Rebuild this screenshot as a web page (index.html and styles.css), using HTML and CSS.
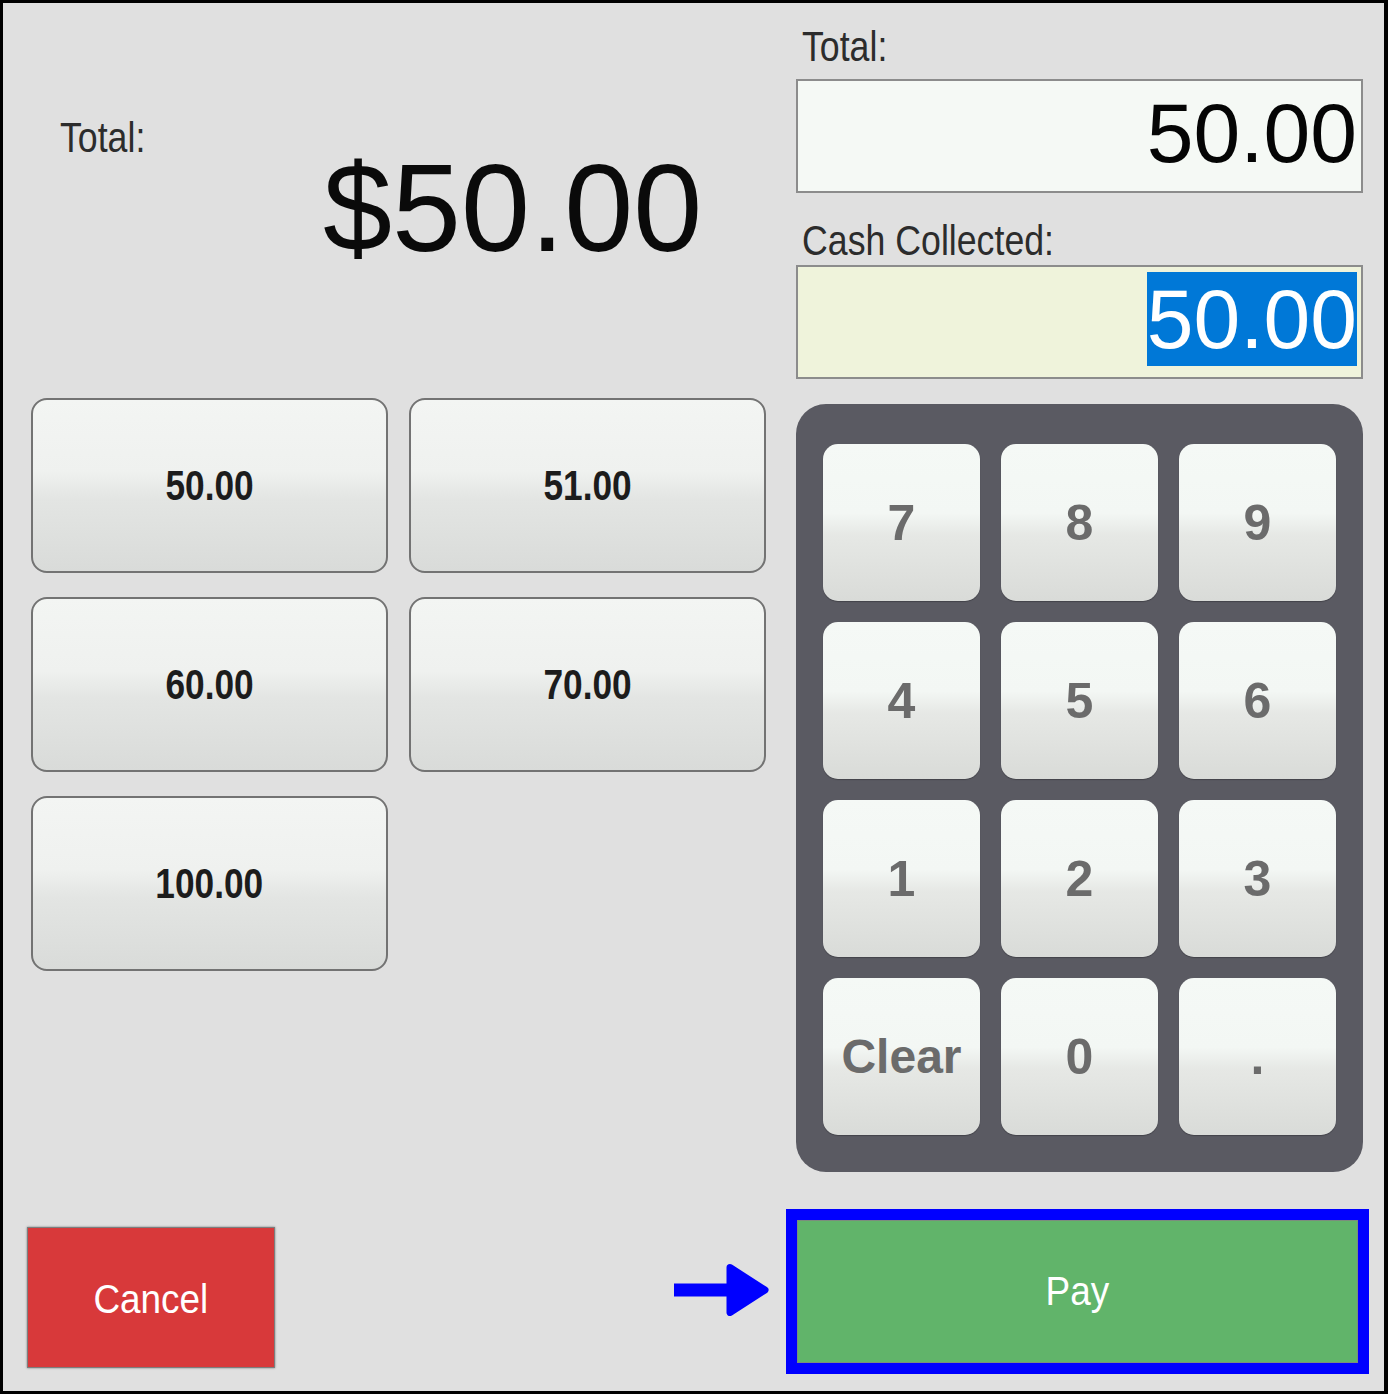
FILE: index.html
```html
<!DOCTYPE html>
<html lang="en">
<head>
<meta charset="utf-8">
<title>Cash Payment</title>
<link rel="stylesheet" href="styles.css">
</head>
<body>
<div class="frame">
  <div class="screen">
    <section class="left">
      <div class="summary-label"><span class="narrow">Total:</span></div>
      <div class="summary-amount">$50.00</div>
      <div class="quick-grid">
        <button class="quick"><span class="narrow-c">50.00</span></button>
        <button class="quick"><span class="narrow-c">51.00</span></button>
        <button class="quick"><span class="narrow-c">60.00</span></button>
        <button class="quick"><span class="narrow-c">70.00</span></button>
        <button class="quick"><span class="narrow-c">100.00</span></button>
      </div>
    </section>
    <section class="right">
      <div class="field-label"><span class="narrow">Total:</span></div>
      <div class="field field-total"><span class="field-value">50.00</span></div>
      <div class="field-label field-label-cash"><span class="narrow">Cash Collected:</span></div>
      <div class="field field-cash"><span class="field-value selected">50.00</span></div>
      <div class="keypad">
        <button class="key">7</button>
        <button class="key">8</button>
        <button class="key">9</button>
        <button class="key">4</button>
        <button class="key">5</button>
        <button class="key">6</button>
        <button class="key">1</button>
        <button class="key">2</button>
        <button class="key">3</button>
        <button class="key key-clear">Clear</button>
        <button class="key">0</button>
        <button class="key">.</button>
      </div>
    </section>
    <div class="actions-left">
      <button class="cancel"><span class="narrow-c narrow-wide">Cancel</span></button>
      <svg class="arrow" viewBox="0 0 95 52" width="95" height="52" aria-hidden="true">
        <rect x="0" y="19.5" width="60" height="13" fill="#0000ff"/>
        <polygon points="56,3.5 91,26 56,48.5" fill="#0000ff" stroke="#0000ff" stroke-width="7" stroke-linejoin="round"/>
      </svg>
    </div>
    <div class="actions-right">
      <div class="pay-highlight">
        <button class="pay"><span class="narrow-c narrow-wide">Pay</span></button>
      </div>
    </div>
  </div>
</div>
</body>
</html>
```
FILE: styles.css
```css
html, body {
  margin: 0;
  padding: 0;
  background: #ffffff;
}

.frame {
  width: 1388px;
  height: 1394px;
  box-sizing: border-box;
  border: 3px solid #000000;
  border-right-width: 4px;
  background: #e0e0e0;
  font-family: "Liberation Sans", Arial, sans-serif;
  overflow: hidden;
}

.screen {
  display: grid;
  grid-template-columns: 735px 567px;
  grid-template-rows: 1206px 165px;
  column-gap: 30px;
  padding-left: 28px;
}

button {
  margin: 0;
  padding: 0;
  cursor: pointer;
}

/* condensed text (Arial Narrow look) */
.narrow {
  display: inline-block;
  transform: scaleX(0.85);
  transform-origin: left center;
  white-space: nowrap;
}

.narrow-c {
  display: inline-block;
  transform: scaleX(0.84);
  transform-origin: center center;
  white-space: nowrap;
}

.narrow-wide {
  transform: scaleX(0.9);
}

/* ---------- left column ---------- */
.summary-label {
  margin: 114px 0 0 29px;
  font-size: 42px;
  line-height: 42px;
  color: #2c2c2c;
}

.summary-amount {
  margin: -13px 0 0 292px;
  font-size: 124px;
  line-height: 124px;
  color: #0a0a0a;
}

.quick-grid {
  margin-top: 128px;
  display: grid;
  grid-template-columns: repeat(2, 357px);
  grid-auto-rows: 175px;
  column-gap: 21px;
  row-gap: 24px;
}

.quick {
  box-sizing: border-box;
  border: 2px solid #737373;
  border-radius: 16px;
  background: linear-gradient(#f3f5f3 0%, #eff1ef 42%, #e3e5e3 58%, #d9dbd9 100%);
  font-family: "Liberation Sans", Arial, sans-serif;
  font-weight: bold;
  font-size: 42px;
  color: #1c1c1c;
}

/* ---------- right column ---------- */
.field-label {
  margin: 23px 0 0 6px;
  font-size: 42px;
  line-height: 42px;
  color: #2c2c2c;
}

.field-label-cash {
  margin-top: 27px;
}

.field {
  height: 114px;
  box-sizing: border-box;
  border: 2px solid #8c8c8c;
  display: flex;
  justify-content: flex-end;
  align-items: flex-start;
  padding: 5px 4px 0 0;
}

.field-total {
  margin-top: 11px;
  background: #f5f9f5;
}

.field-cash {
  margin-top: 3px;
  background: #eff3db;
}

.field-value {
  display: block;
  font-size: 84px;
  line-height: 94px;
  color: #050505;
}

.selected {
  background: #0078d7;
  color: #ffffff;
}

.keypad {
  margin-top: 25px;
  height: 768px;
  box-sizing: border-box;
  padding: 40px 27px 38px;
  background: #5a5a62;
  border-radius: 30px;
  display: grid;
  grid-template-columns: repeat(3, 157px);
  grid-template-rows: repeat(4, 157px);
  gap: 21px;
}

.key {
  border: none;
  border-radius: 15px;
  background: linear-gradient(#f5f9f6 0%, #f3f7f4 44%, #e6e8e5 58%, #d9dbd8 100%);
  box-shadow: 0 1px 1px rgba(0, 0, 0, 0.25);
  font-family: "Liberation Sans", Arial, sans-serif;
  font-weight: bold;
  font-size: 50px;
  color: #6b6b6b;
}

.key-clear {
  font-size: 48px;
}

/* ---------- bottom actions ---------- */
.actions-left {
  display: flex;
  align-items: flex-start;
  justify-content: space-between;
}

.cancel {
  margin: 18px 0 0 -4px;
  width: 248px;
  height: 141px;
  box-sizing: border-box;
  border: 1px solid #7d7d7d;
  box-shadow: 0 0 2px rgba(80, 80, 80, 0.7);
  background: #d8393a;
  color: #ffffff;
  font-family: "Liberation Sans", Arial, sans-serif;
  font-size: 41px;
  padding-top: 3px;
}

.arrow {
  display: block;
  margin: 55px -3px 0 0;
}

.pay-highlight {
  margin: 0 -6px 0 -10px;
  height: 165px;
  box-sizing: border-box;
  border: 11px solid #0000ff;
}

.pay {
  display: block;
  width: 100%;
  height: 100%;
  box-sizing: border-box;
  border: 1px solid #7c8c7d;
  background: #61b46a;
  color: #ffffff;
  font-family: "Liberation Sans", Arial, sans-serif;
  font-size: 41px;
}
```
